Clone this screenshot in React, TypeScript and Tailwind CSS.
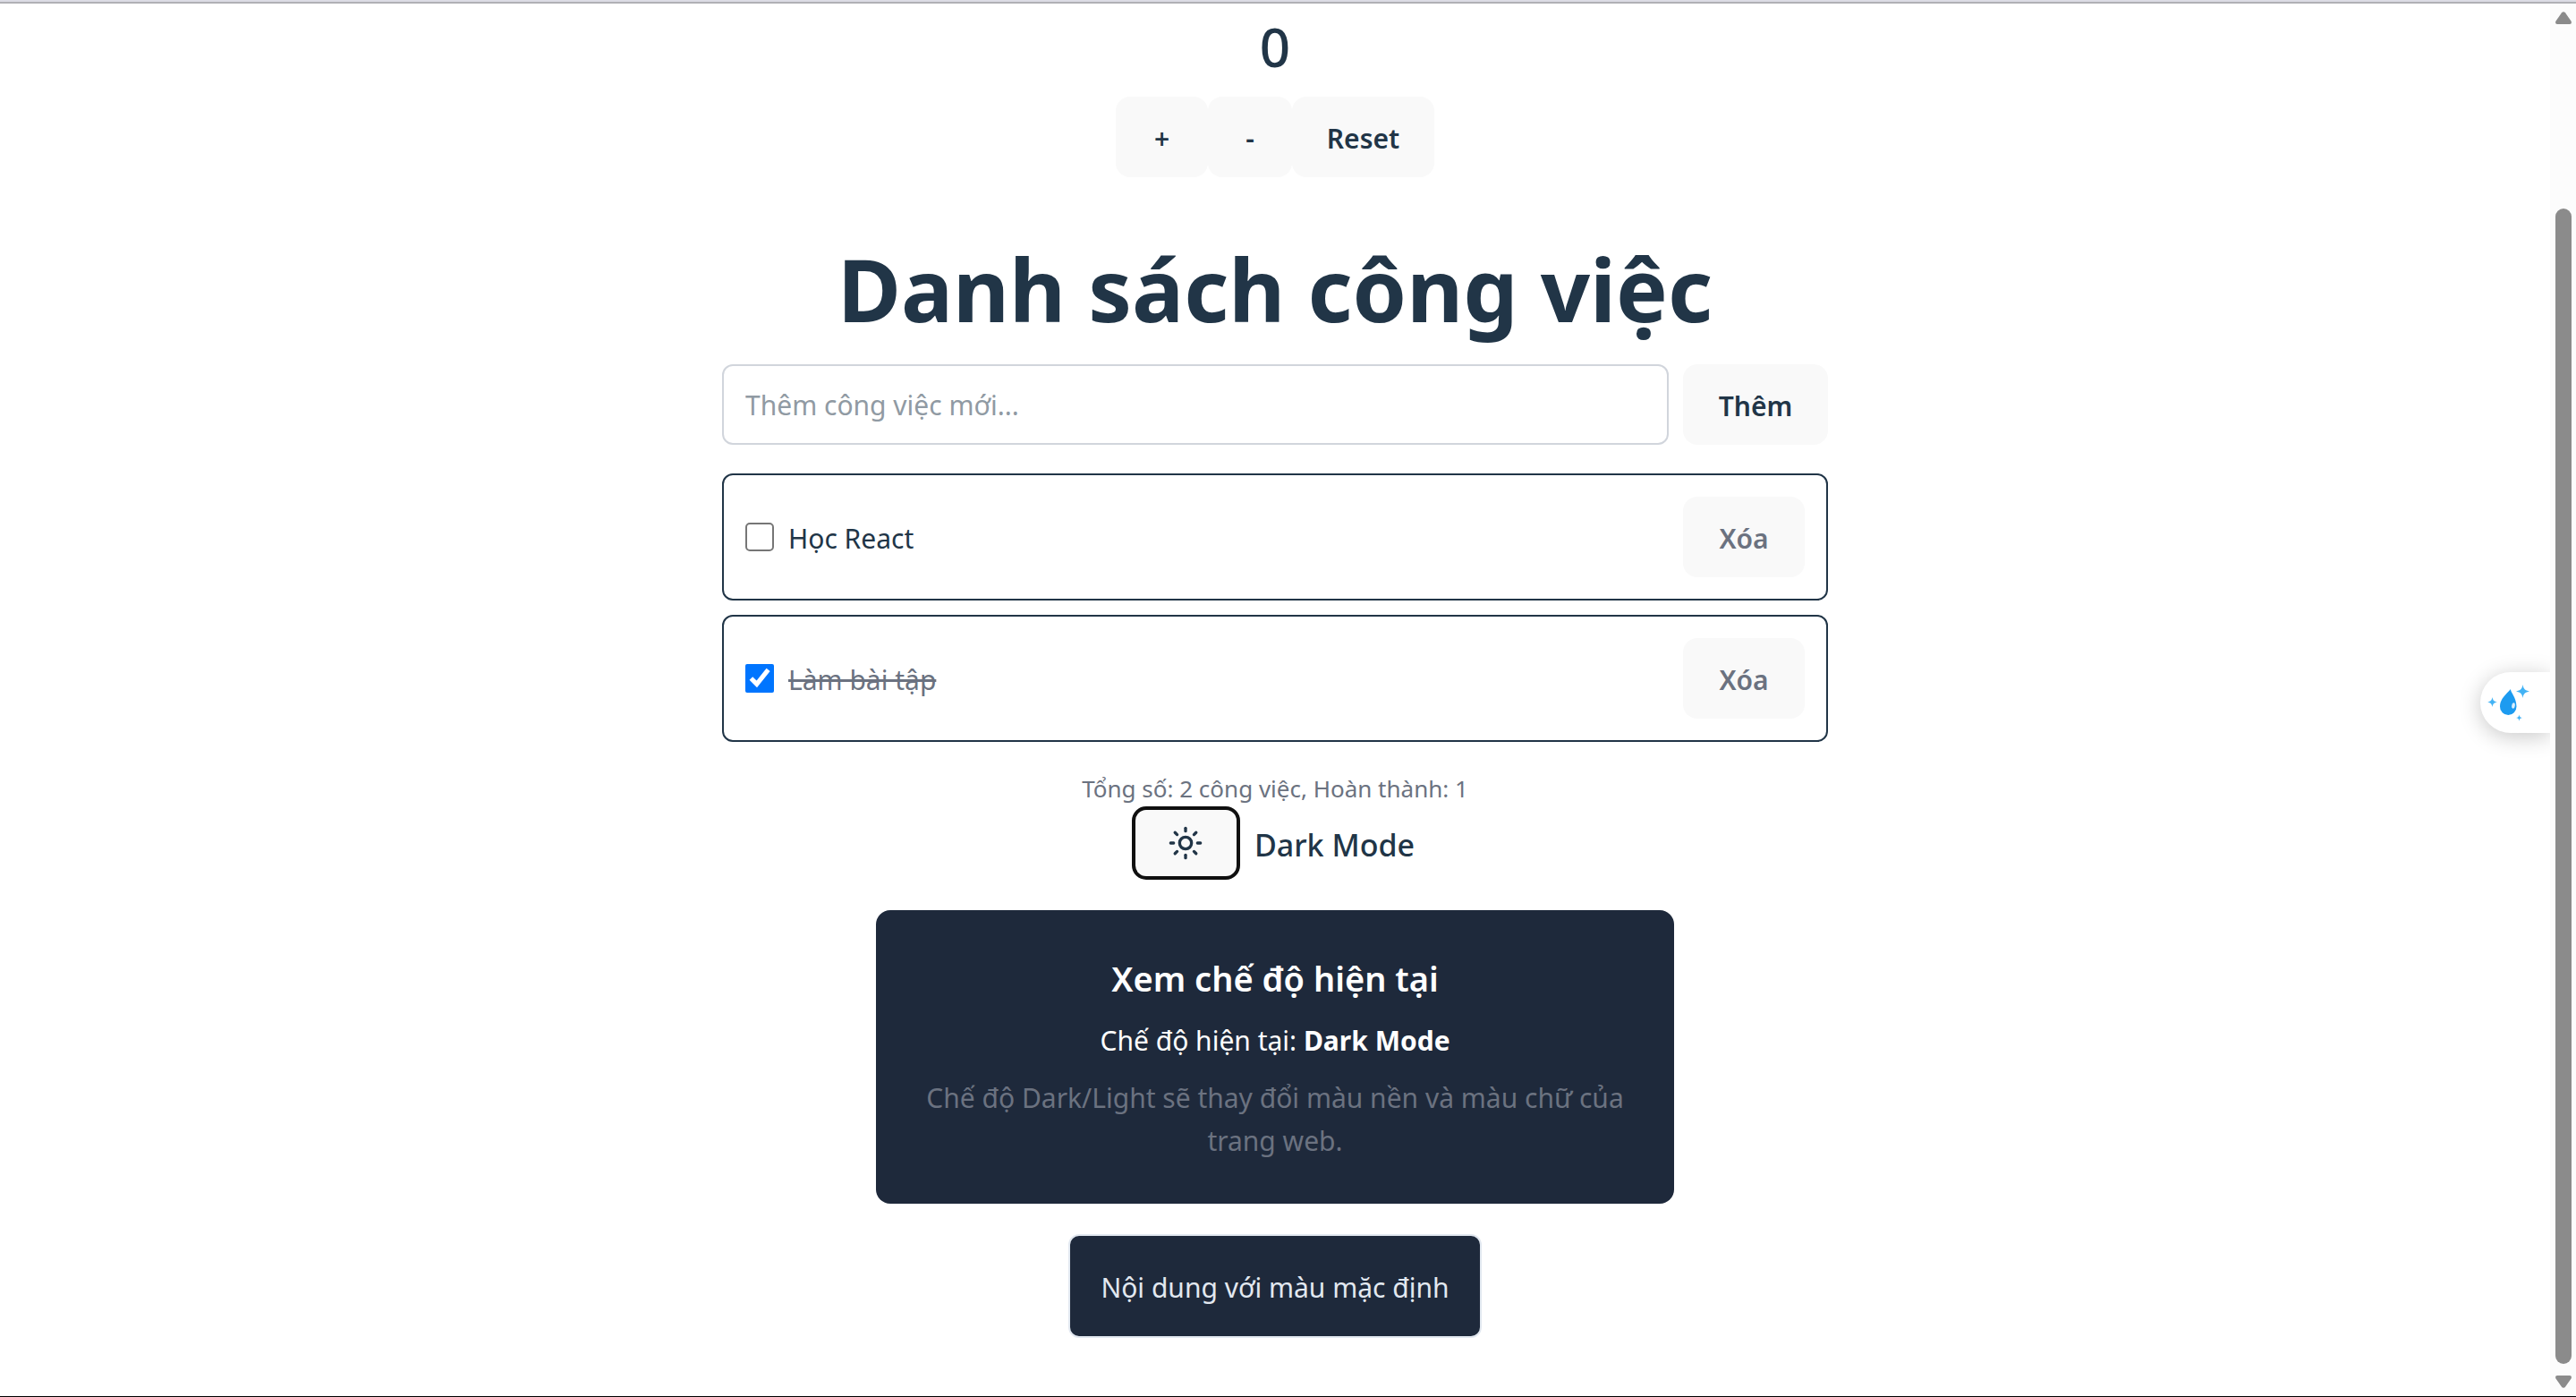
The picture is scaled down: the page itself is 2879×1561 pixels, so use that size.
import { useState } from "react";
import { Sun } from "lucide-react";

const buttonClass =
  "flex h-[90px] items-center justify-center rounded-2xl bg-[#f9f9f9] pt-1 font-semibold";

function TaskItem({
  id,
  name,
  done,
  onToggle,
  onRemove,
}: {
  id: string;
  name: string;
  done: boolean;
  onToggle: () => void;
  onRemove: () => void;
}) {
  return (
    <li className="flex items-center justify-between rounded-xl border-2 border-[#213547] p-6">
      <div className="flex items-center gap-4">
        <input
          id={id}
          type="checkbox"
          checked={done}
          onChange={onToggle}
          className="size-8 rounded-[5px] border-[#767676] accent-[#0075ff] not-checked:appearance-none not-checked:border-2"
        />
        <label htmlFor={id} className={done ? "pt-1 text-[#6b7280] line-through" : "pt-1"}>
          {name}
        </label>
      </div>
      <button type="button" onClick={onRemove} className={`${buttonClass} w-[136px] text-[#6b7280]`}>
        Xóa
      </button>
    </li>
  );
}

function DropIcon() {
  return (
    <svg viewBox="0 0 48 42" className="h-[42px] w-12" aria-hidden="true">
      <path
        d="M26 5c-.6 3.200 6.500 9 6.500 19.500a9.200 9.500 0 0 1-18.500 0C14 15.500 21.500 10.500 26 5Z"
        fill="#1d9bf0"
      />
      <ellipse cx="29" cy="23.500" rx="1.800" ry="3.200" fill="#d9effd" transform="rotate(8 29 23.500)" />
      <path d="M39.500 0c.9 5 2.500 6.500 7.500 7.500-5 1-6.600 2.500-7.500 7.500-.9-5-2.500-6.500-7.500-7.500 5-1 6.600-2.500 7.500-7.500Z" fill="#43b3f5" />
      <path d="M5.500 14c.7 3.600 1.800 4.800 5.500 5.500-3.700.7-4.800 1.900-5.500 5.500-.7-3.600-1.800-4.800-5.500-5.500 3.700-.7 4.800-1.900 5.500-5.500Z" fill="#43b3f5" />
      <path d="M35.500 33.500c.4 2.500 1.100 3.200 3.500 3.600-2.400.5-3.100 1.200-3.500 3.700-.4-2.500-1.100-3.200-3.500-3.700 2.400-.4 3.100-1.100 3.500-3.600Z" fill="#43b3f5" />
    </svg>
  );
}

export default function App() {
  const [count, setCount] = useState(0);
  const [text, setText] = useState("");
  const [dark, setDark] = useState(true);
  const [tasks, setTasks] = useState([
    { id: 1, name: "Học React", done: false },
    { id: 2, name: "Làm bài tập", done: true },
  ]);
  const mode = dark ? "Dark Mode" : "Light Mode";

  return (
    <div className="relative flex h-screen flex-col overflow-hidden border-b border-black bg-white font-['Noto_Sans',sans-serif] text-[30px] leading-[48px] text-[#213547]">
      <div className="h-1 shrink-0 border-b-2 border-[#b0b0b5] bg-[#dcdce5]" />
      <div className="flex min-h-0 flex-1">
        <main className="flex min-w-0 flex-1 flex-col items-center">
          <p className="mb-2 text-[60px] leading-[96px] font-medium">{count}</p>
          <div className="flex">
            <button type="button" onClick={() => setCount(count + 1)} className={`${buttonClass} w-[103px]`}>+</button>
            <button type="button" onClick={() => setCount(count - 1)} className={`${buttonClass} w-[94px]`}>-</button>
            <button type="button" onClick={() => setCount(0)} className={`${buttonClass} w-[159px]`}>Reset</button>
          </div>

          <section className="flex w-[1236px] max-w-full flex-col">
            <h1 className="mt-[68px] mb-[29px] text-center text-[97px] leading-[112px] font-bold">Danh sách công việc</h1>
            <form
              className="mb-8 flex gap-4"
              onSubmit={(e) => {
                e.preventDefault();
                if (text.trim()) {
                  setTasks([...tasks, { id: Date.now(), name: text, done: false }]);
                  setText("");
                }
              }}
            >
              <input
                type="text"
                aria-label="Thêm công việc mới"
                placeholder="Thêm công việc mới..."
                value={text}
                onChange={(e) => setText(e.target.value)}
                className="h-[90px] min-w-0 flex-1 rounded-xl border-2 border-gray-300 px-6 placeholder:text-[#909aa3]"
              />
              <button type="submit" className={`${buttonClass} w-[162px]`}>Thêm</button>
            </form>
            <ul className="flex flex-col gap-4">
              {tasks.map((t) => (
                <TaskItem
                  key={t.id}
                  id={`task-${t.id}`}
                  name={t.name}
                  done={t.done}
                  onToggle={() => setTasks(tasks.map((o) => (o.id === t.id ? { ...o, done: !o.done } : o)))}
                  onRemove={() => setTasks(tasks.filter((o) => o.id !== t.id))}
                />
              ))}
            </ul>
            <p className="mt-[30px] mb-[2px] text-center text-[26px] leading-[44px] text-[#6b7280]">
              Tổng số: {tasks.length} công việc, Hoàn thành: {tasks.filter((t) => t.done).length}
            </p>
          </section>

          <div className="flex items-center gap-5">
            <button
              type="button"
              aria-label={mode}
              onClick={() => setDark(!dark)}
              className="flex h-[74px] w-[113px] items-center justify-center rounded-xl bg-[#f9f9f9] outline-4 outline-[#101010]"
            >
              <Sun size={40} />
            </button>
            <span className="pt-1 text-[34px] font-medium">{mode}</span>
          </div>

          <section className="mt-[38px] w-[892px] max-w-full rounded-2xl bg-[#1e293b] px-12 pt-12 pb-[46px] text-center text-white">
            <h2 className="text-[38px] leading-[56px] font-semibold">Xem chế độ hiện tại</h2>
            <p className="mt-[18px]">
              Chế độ hiện tại: <strong>{mode}</strong>
            </p>
            <p className="mt-4 text-[#6b7280]">
              Chế độ Dark/Light sẽ thay đổi màu nền và màu chữ của trang web.
            </p>
          </section>

          <div className="mt-[34px] rounded-xl border-2 border-[#e2e8f0] bg-[#1e293b] px-[34px] pt-[34px] pb-[30px] text-[#e2e8f0]">
            Nội dung với màu mặc định
          </div>
        </main>

        <div className="flex w-[29px] shrink-0 flex-col items-center bg-[#fcfcfc] pt-[9px] pb-[9px]" aria-hidden="true">
          <svg viewBox="0 0 18 14" className="h-[14px] w-[18px]" fill="#8b8b8b">
            <path d="M7 1.200a2.600 2.600 0 0 1 4 0l6.500 9.300c.9 1.500.3 3.500-1.500 3.500H2c-1.800 0-2.400-2-1.500-3.500Z" />
          </svg>
          <div className="mt-[206px] mb-[13px] w-[18px] flex-1 rounded-full bg-[#8b8b8b]" />
          <svg viewBox="0 0 18 14" className="h-[14px] w-[18px]" fill="#8b8b8b">
            <path d="M7 12.800a2.600 2.600 0 0 0 4 0l6.500-9.300C18.400 2 17.800 0 16 0H2C.2 0-.4 2 .5 3.500Z" />
          </svg>
        </div>
      </div>

      <div className="absolute top-[751px] right-[29px] h-[68px] w-[78px] overflow-visible [clip-path:inset(-40px_0_-40px_-40px)]">
        <button
          type="button"
          aria-label="Trợ lý"
          className="flex size-full items-start rounded-l-full bg-white pt-[14px] pl-2 shadow-[0_4px_24px_rgba(0,0,0,0.22)]"
        >
          <DropIcon />
        </button>
      </div>
    </div>
  );
}
